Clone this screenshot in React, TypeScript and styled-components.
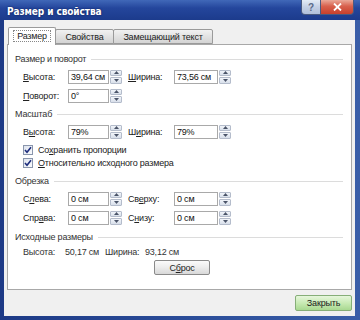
import React from "react";
import styled, { createGlobalStyle, css } from "styled-components";

const Global = createGlobalStyle`
  html, body { margin: 0; padding: 0; width: 360px; height: 320px; overflow: hidden; background: #24458f; }
  body { font-family: "Liberation Sans", Arial, sans-serif; }
  #root { width: 360px; height: 320px; }
`;

const uiFont = css`
  font-family: "Liberation Sans", Arial, sans-serif;
  font-size: 9px;
  letter-spacing: -0.2px;
`;

const Window = styled.div`
  width: 360px;
  height: 320px;
  display: flex;
  flex-direction: column;
  background: linear-gradient(90deg, #1d3a86 0%, #2a4c98 50%, #3a5ea8 100%);
`;

const TitleBar = styled.div`
  height: 20px;
  flex: none;
  display: flex;
  align-items: flex-start;
  background: linear-gradient(180deg, #4068b8 0%, #24469c 40%, #1c3b8c 100%);
`;

const Title = styled.div`
  flex: 1;
  padding: 5px 0 0 7px;
  color: #fff;
  font-family: "Liberation Sans Narrow", "DejaVu Sans Condensed", "Liberation Sans", sans-serif;
  font-weight: bold;
  font-size: 10px;
  line-height: 13px;
  letter-spacing: -0.1px;
  text-shadow: 0 0 2px #0a1a50;
`;

const CaptionButtons = styled.div`
  display: flex;
  margin-right: 6px;
`;

const CaptionButton = styled.div<{ $close?: boolean }>`
  width: ${(p) => (p.$close ? 33 : 20)}px;
  height: 15px;
  box-sizing: border-box;
  display: flex;
  align-items: center;
  justify-content: center;
  font-family: "Liberation Sans", Arial, sans-serif;
  font-size: 10px;
  font-weight: bold;
  border: 1px solid #4a5a80;
  border-top: none;
  border-left: ${(p) => (p.$close ? "none" : "1px solid #4a5a80")};
  border-radius: ${(p) => (p.$close ? "0 0 4px 0" : "0 0 0 4px")};
  color: ${(p) => (p.$close ? "#fff" : "#5a6a88")};
  background: ${(p) =>
    p.$close
      ? "linear-gradient(180deg, #eaa898 0%, #d8604c 45%, #c8402c 100%)"
      : "linear-gradient(180deg, #e4ecf6 0%, #c4d0e4 50%, #b0c0dc 100%)"};
`;

const Client = styled.div`
  flex: 1;
  margin: 0 5px 4px 4px;
  background: #f0f0f0;
  display: flex;
  flex-direction: column;
  ${uiFont}
`;

const TabRow = styled.div`
  height: 24px;
  flex: none;
  display: flex;
  align-items: flex-end;
  padding-left: 4px;
  position: relative;
  z-index: 1;
`;

const Tab = styled.div<{ $active?: boolean; $w: number }>`
  width: ${(p) => p.$w}px;
  height: ${(p) => (p.$active ? 18 : 15)}px;
  box-sizing: border-box;
  border: 1px solid #9a9a9a;
  border-bottom: ${(p) => (p.$active ? "none" : "1px solid #9a9a9a")};
  margin-bottom: ${(p) => (p.$active ? -1 : 0)}px;
  margin-left: ${(p) => (p.$active ? 0 : -1)}px;
  border-radius: 2px 2px 0 0;
  background: ${(p) => (p.$active ? "#fff" : "linear-gradient(180deg, #f2f2f2 0%, #e2e2e2 50%, #d4d4d4 100%)")};
  display: flex;
  align-items: center;
  justify-content: center;
  color: #222;
  padding-bottom: ${(p) => (p.$active ? 2 : 0)}px;
`;

const FocusText = styled.span`
  outline: 1px dotted #888;
  padding: 0 3px;
`;

const Panel = styled.div`
  height: 246px;
  flex: none;
  margin: 0 3px;
  box-sizing: border-box;
  background: #fff;
  border: 1px solid #a8a8a8;
  padding: 7px 7px 0 7px;
  display: flex;
  flex-direction: column;
`;

const SectionHeader = styled.div<{ $top: number }>`
  height: 14px;
  margin-top: ${(p) => p.$top}px;
  display: flex;
  align-items: center;
  gap: 5px;
  color: #333;
  &::after {
    content: "";
    flex: 1;
    height: 1px;
    margin-right: 1px;
    background: #dcdcdc;
  }
`;

const Rows = styled.div<{ $top: number }>`
  margin-top: ${(p) => p.$top}px;
  display: flex;
  flex-direction: column;
`;

const FieldRow = styled.div`
  height: 19px;
  display: flex;
  align-items: center;
  padding-left: 8px;
`;

const Label = styled.div<{ $w: number; $ml?: number }>`
  width: ${(p) => p.$w}px;
  margin-left: ${(p) => p.$ml ?? 0}px;
  color: #222;
  white-space: nowrap;
`;

const Key = styled.span`
  text-decoration: underline;
`;

const Field = styled.div<{ $w: number }>`
  width: ${(p) => p.$w}px;
  height: 14px;
  display: flex;
`;

const Input = styled.div`
  flex: 1;
  box-sizing: border-box;
  border: 1px solid #a9a9a9;
  background: #fff;
  line-height: 12px;
  padding-left: 2px;
  color: #111;
  white-space: nowrap;
  overflow: hidden;
`;

const Spinner = styled.div`
  width: 12px;
  display: flex;
  flex-direction: column;
  gap: 1px;
  padding: 0 0 0 1px;
`;

const SpinHalf = styled.div`
  flex: 1;
  box-sizing: border-box;
  border: 1px solid #b4bccb;
  border-radius: 1px;
  background: linear-gradient(180deg, #f2f5fa 0%, #d8dfea 100%);
  display: flex;
  align-items: center;
  justify-content: center;
`;

const CheckRow = styled.div<{ $top?: number }>`
  height: 13px;
  margin-top: ${(p) => p.$top ?? 0}px;
  display: flex;
  align-items: center;
  padding-left: 8px;
  gap: 5px;
  color: #222;
`;

const Box = styled.div`
  width: 10px;
  height: 10px;
  box-sizing: border-box;
  border: 1px solid #8a96ac;
  background: linear-gradient(135deg, #dde3ee 0%, #fafbfd 100%);
  display: flex;
  align-items: center;
  justify-content: center;
`;

const InfoRow = styled.div`
  height: 14px;
  margin-top: 1px;
  display: flex;
  align-items: center;
  padding-left: 8px;
  color: #333;
`;

const InfoCell = styled.div<{ $w: number }>`
  width: ${(p) => p.$w}px;
  white-space: nowrap;
`;

const ButtonRow = styled.div`
  margin-top: 1px;
  padding-left: 139px;
  display: flex;
`;

const PushButton = styled.div<{ $green?: boolean; $w: number }>`
  width: ${(p) => p.$w}px;
  height: ${(p) => (p.$green ? 16 : 15)}px;
  box-sizing: border-box;
  border: 1px solid ${(p) => (p.$green ? "#86ae78" : "#8a8a8a")};
  border-radius: 2px;
  background: ${(p) =>
    p.$green
      ? "linear-gradient(180deg, #e6f6dc 0%, #c8eab4 50%, #a8d890 100%)"
      : "linear-gradient(180deg, #fbfbfb 0%, #ececec 50%, #d8d8d8 100%)"};
  display: flex;
  align-items: center;
  justify-content: center;
  color: #222;
`;

const Footer = styled.div`
  flex: 1;
  display: flex;
  justify-content: flex-end;
  align-items: flex-start;
  padding: 5px 3px 0 0;
`;

const Arrow = ({ up }: { up?: boolean }) => (
  <svg width="5" height="3" viewBox="0 0 5 3">
    <path d={up ? "M0 3 L2.5 0 L5 3 Z" : "M0 0 L2.5 3 L5 0 Z"} fill="#4a5468" />
  </svg>
);

const Spin = ({ value, w }: { value: string; w: number }) => (
  <Field $w={w}>
    <Input>{value}</Input>
    <Spinner>
      <SpinHalf>
        <Arrow up />
      </SpinHalf>
      <SpinHalf>
        <Arrow />
      </SpinHalf>
    </Spinner>
  </Field>
);

const Check = () => (
  <Box>
    <svg width="8" height="8" viewBox="0 0 8 8">
      <path d="M1 4 L3 6.2 L7 1.2" stroke="#1c2c7c" strokeWidth="1.6" fill="none" />
    </svg>
  </Box>
);

export default function App() {
  return (
    <>
      <Global />
      <Window>
        <TitleBar>
          <Title>Размер и свойства</Title>
          <CaptionButtons>
            <CaptionButton>?</CaptionButton>
            <CaptionButton $close>
              <svg width="9" height="8" viewBox="0 0 9 8">
                <path d="M1 0.5 L8 7.5 M8 0.5 L1 7.5" stroke="#fff" strokeWidth="1.8" />
              </svg>
            </CaptionButton>
          </CaptionButtons>
        </TitleBar>
        <Client>
          <TabRow>
            <Tab $active $w={48}>
              <FocusText>Размер</FocusText>
            </Tab>
            <Tab $w={59}>Свойства</Tab>
            <Tab $w={100}>Замещающий текст</Tab>
          </TabRow>
          <Panel>
            <SectionHeader $top={0}>Размер и поворот</SectionHeader>
            <Rows $top={1}>
              <FieldRow>
                <Label $w={45}>
                  <Key>В</Key>ысота:
                </Label>
                <Spin value="39,64 см" w={54} />
                <Label $w={46} $ml={6}>
                  <Key>Ш</Key>ирина:
                </Label>
                <Spin value="73,56 см" w={57} />
              </FieldRow>
              <FieldRow>
                <Label $w={45}>
                  <Key>П</Key>оворот:
                </Label>
                <Spin value="0°" w={54} />
              </FieldRow>
            </Rows>
            <SectionHeader $top={2}>Масштаб</SectionHeader>
            <Rows $top={1}>
              <FieldRow>
                <Label $w={45}>
                  В<Key>ы</Key>сота:
                </Label>
                <Spin value="79%" w={54} />
                <Label $w={46} $ml={6}>
                  Ш<Key>и</Key>рина:
                </Label>
                <Spin value="79%" w={57} />
              </FieldRow>
            </Rows>
            <CheckRow $top={2}>
              <Check />
              <span>
                Со<Key>х</Key>ранить пропорции
              </span>
            </CheckRow>
            <CheckRow>
              <Check />
              <span>
                <Key>О</Key>тносительно исходного размера
              </span>
            </CheckRow>
            <SectionHeader $top={5}>Обрезка</SectionHeader>
            <Rows $top={1}>
              <FieldRow>
                <Label $w={45}>
                  С<Key>л</Key>ева:
                </Label>
                <Spin value="0 см" w={54} />
                <Label $w={46} $ml={6}>
                  Св<Key>е</Key>рху:
                </Label>
                <Spin value="0 см" w={57} />
              </FieldRow>
              <FieldRow>
                <Label $w={45}>
                  Спр<Key>а</Key>ва:
                </Label>
                <Spin value="0 см" w={54} />
                <Label $w={46} $ml={6}>
                  С<Key>н</Key>изу:
                </Label>
                <Spin value="0 см" w={57} />
              </FieldRow>
            </Rows>
            <SectionHeader $top={3}>Исходные размеры</SectionHeader>
            <InfoRow>
              <InfoCell $w={42}>Высота:</InfoCell>
              <InfoCell $w={40}>50,17 см</InfoCell>
              <InfoCell $w={40}>Ширина:</InfoCell>
              <InfoCell $w={50}>93,12 см</InfoCell>
            </InfoRow>
            <ButtonRow>
              <PushButton $w={56}>
                С<Key>б</Key>рос
              </PushButton>
            </ButtonRow>
          </Panel>
          <Footer>
            <PushButton $green $w={57}>
              Закрыть
            </PushButton>
          </Footer>
        </Client>
      </Window>
    </>
  );
}
